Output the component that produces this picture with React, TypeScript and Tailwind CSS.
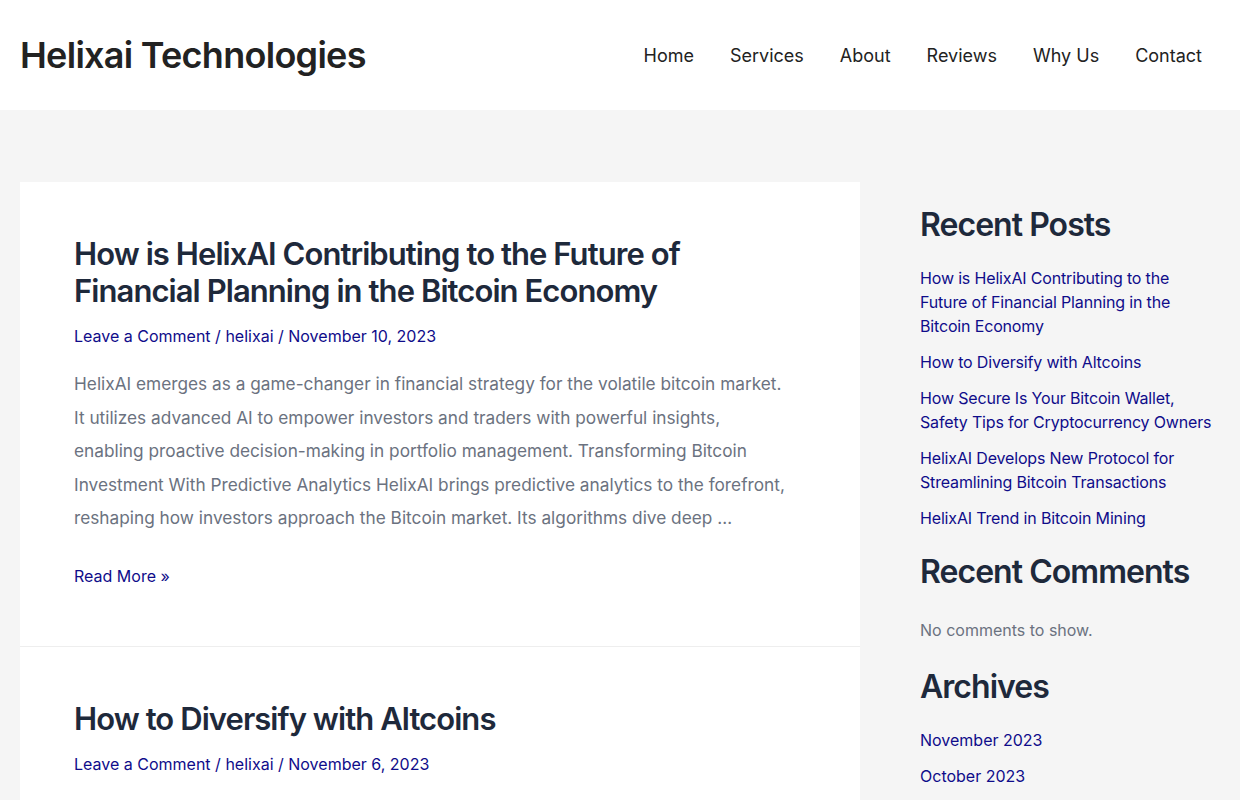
const navItems = ["Home", "Services", "About", "Reviews", "Why Us", "Contact"];

const recentPosts = [
  "How is HelixAI Contributing to the Future of Financial Planning in the Bitcoin Economy",
  "How to Diversify with Altcoins",
  "How Secure Is Your Bitcoin Wallet, Safety Tips for Cryptocurrency Owners",
  "HelixAI Develops New Protocol for Streamlining Bitcoin Transactions",
  "HelixAI Trend in Bitcoin Mining",
];

const archives = ["November 2023", "October 2023"];

type Post = {
  title: string;
  date: string;
  excerpt?: string;
};

const posts: Post[] = [
  {
    title: "How is HelixAI Contributing to the Future of Financial Planning in the Bitcoin Economy",
    date: "November 10, 2023",
    excerpt:
      "HelixAI emerges as a game-changer in financial strategy for the volatile bitcoin market. It utilizes advanced AI to empower investors and traders with powerful insights, enabling proactive decision-making in portfolio management. Transforming Bitcoin Investment With Predictive Analytics HelixAI brings predictive analytics to the forefront, reshaping how investors approach the Bitcoin market. Its algorithms dive deep …",
  },
  {
    title: "How to Diversify with Altcoins",
    date: "November 6, 2023",
    excerpt:
      "Diversifying your crypto portfolio with altcoins can help spread risk and open up new opportunities beyond Bitcoin.",
  },
];

const headingFont = "font-['Inter',sans-serif] font-semibold tracking-[-0.03em]";

function PostCard({ post }: { post: Post }) {
  return (
    <article className="border-b border-[#eeeeee] bg-white px-[54px] pt-[53px] pb-[58px]">
      <h2 className={`${headingFont} max-w-[640px] text-[31px] leading-[37px] text-[#1e293b]`}>{post.title}</h2>
      <p className="mt-[15px] text-[16px] leading-[24px] text-[#0f0c8a]">
        <a href="#">Leave a Comment</a> / <a href="#">helixai</a> / <a href="#">{post.date}</a>
      </p>
      {post.excerpt && (
        <p className="mt-[19px] max-w-[720px] text-[17.25px] leading-[33.5px] text-[#6b7280]">{post.excerpt}</p>
      )}
      <p className="mt-[29px] text-[16px] leading-[24px] text-[#0f0c8a]">
        <a href="#">Read More »</a>
      </p>
    </article>
  );
}

function WidgetTitle({ children }: { children: string }) {
  return <h3 className={`${headingFont} text-[32px] leading-[40px] text-[#1e293b]`}>{children}</h3>;
}

export default function App() {
  return (
    <div className="min-h-screen bg-[#f5f5f5] font-['Inter',sans-serif]">
      <header className="flex h-[110px] items-center justify-between bg-white px-5">
        <a href="#" className="font-['Inter',sans-serif] text-[36px] font-semibold tracking-[-0.02em] text-[#222222]">
          Helixai Technologies
        </a>
        <nav className="flex">
          {navItems.map((item) => (
            <a key={item} href="#" className="px-[18px] text-[18px] text-[#222222]">
              {item}
            </a>
          ))}
        </nav>
      </header>

      <div className="flex gap-[60px] px-5 pt-[72px]">
        <main className="w-[840px] shrink-0">
          {posts.map((post) => (
            <PostCard key={post.title} post={post} />
          ))}
        </main>

        <aside className="w-[300px] pt-[23px]">
          <WidgetTitle>Recent Posts</WidgetTitle>
          <ul className="mt-[21px] space-y-[12px]">
            {recentPosts.map((post) => (
              <li key={post} className="text-[16px] leading-[24px] tracking-[-0.01em] text-[#0f0c8a]">
                <a href="#">{post}</a>
              </li>
            ))}
          </ul>

          <div className="mt-[22px]">
            <WidgetTitle>Recent Comments</WidgetTitle>
            <p className="mt-[26px] text-[16px] leading-[24px] text-[#6b7280]">No comments to show.</p>
          </div>

          <div className="mt-[25px]">
            <WidgetTitle>Archives</WidgetTitle>
            <ul className="mt-[21px] space-y-[12px]">
              {archives.map((month) => (
                <li key={month} className="text-[16px] leading-[24px] text-[#0f0c8a]">
                  <a href="#">{month}</a>
                </li>
              ))}
            </ul>
          </div>
        </aside>
      </div>
    </div>
  );
}
